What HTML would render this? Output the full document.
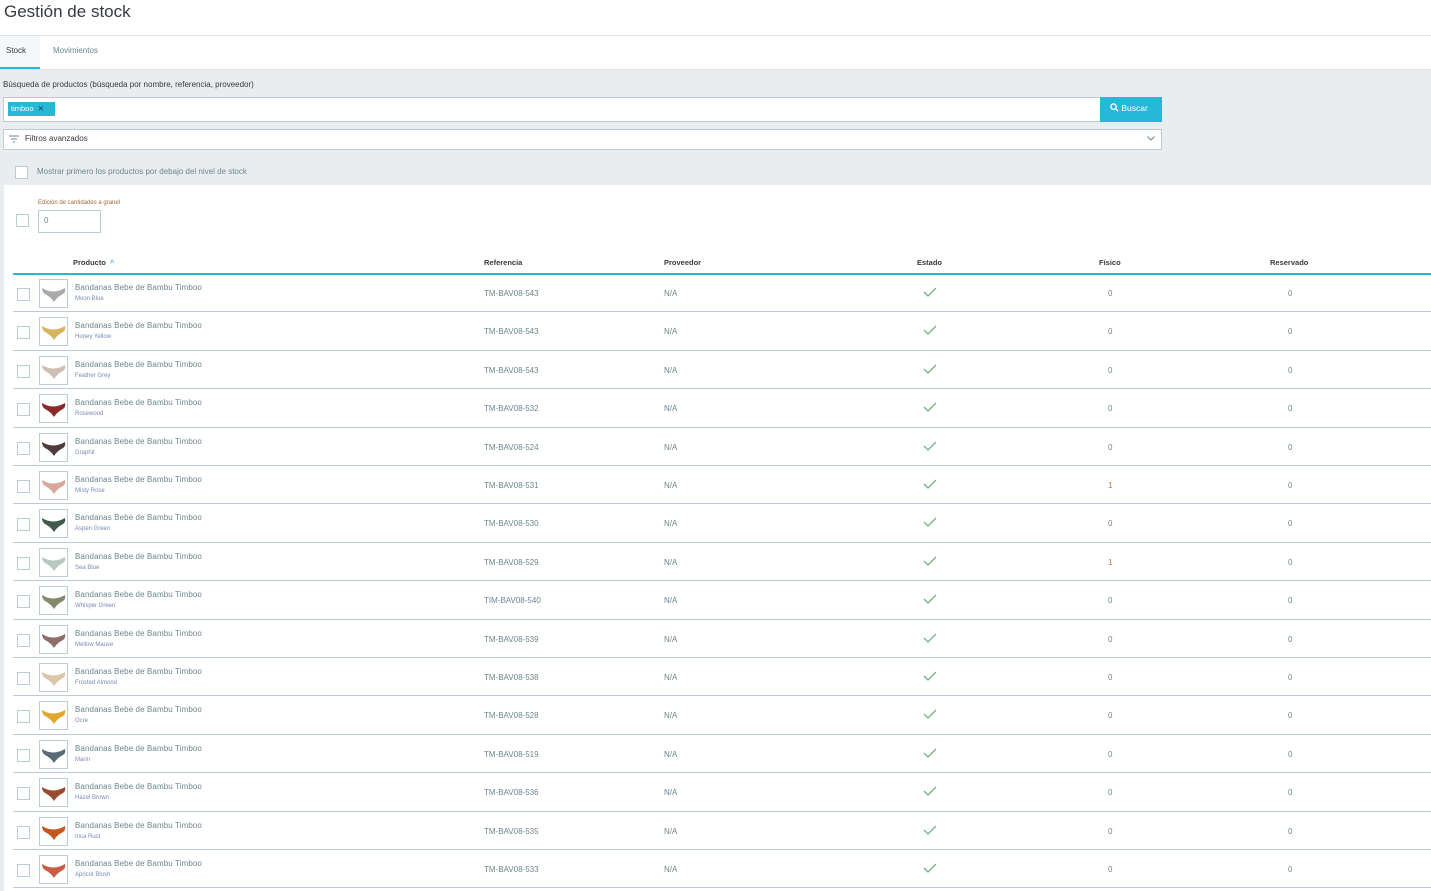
<!DOCTYPE html>
<html><head><meta charset="utf-8"><style>
*{box-sizing:border-box;margin:0;padding:0}
body{width:1431px;height:891px;overflow:hidden;background:#fff;font-family:"Liberation Sans",sans-serif;color:#363a41;position:relative}
.abs{position:absolute}
h1{position:absolute;left:4px;top:2px;font-size:17px;font-weight:normal;color:#363a41}
.cb{position:absolute;width:13px;height:13px;border:1px solid #bbcdd2;background:#fff}
.row{position:absolute;left:13px;width:1418px;height:38.4px;border-bottom:1px solid #bbcdd2;font-size:8px;color:#6c868e}
.row .c{left:4px;top:14px}
.th{position:absolute;left:26px;top:5px;width:29px;height:29px;border:1px solid #bbcdd2;background:#fff}
.nm{position:absolute;left:62px;top:9px;font-size:8px;color:#6c868e;letter-spacing:0.1px}
.vr{position:absolute;left:62px;top:22px;font-size:6px;color:#7a8ab8}
.rf{position:absolute;left:471px;top:15px}
.pv{position:absolute;left:651px;top:15px}
.ck{position:absolute;left:910px;top:13px}
.fi{position:absolute;left:1095px;top:15px}
.rs{position:absolute;left:1275px;top:15px}
.hd{position:absolute;top:258px;font-size:7.5px;font-weight:bold;color:#363a41}
</style></head><body>
<h1>Gestión de stock</h1>
<div class="abs" style="left:0;top:35px;width:1431px;height:1px;background:#dfe3e6"></div>
<div class="abs" style="left:0;top:36px;width:40px;height:33px;background:#f4f8fb;border-bottom:2px solid #25b9d7"></div>
<div class="abs" style="left:6px;top:46px;font-size:8px;color:#363a41">Stock</div>
<div class="abs" style="left:53px;top:46px;font-size:8px;color:#6c868e">Movimientos</div>
<div class="abs" style="left:0;top:69px;width:1431px;height:116px;background:#eaedef;border-top:1px solid #dfe3e6"></div>
<div class="abs" style="left:0;top:185px;width:4px;height:706px;background:#eaedef"></div>
<div class="abs" style="left:3px;top:80px;font-size:8px;color:#363a41">Búsqueda de productos (búsqueda por nombre, referencia, proveedor)</div>
<div class="abs" style="left:3px;top:97px;width:1098px;height:25px;background:#fff;border:1px solid #bbcdd2"></div>
<div class="abs" style="left:8px;top:102px;width:47px;height:14px;background:#25b9d7;color:#fff;font-size:7.5px;padding:2px 3px">timboo <span style="color:#1a3a44;margin-left:2px">✕</span></div>
<div class="abs" style="left:1100px;top:97px;width:62px;height:25px;background:#25b9d7;color:#fff;font-size:8.5px;padding:6px 0 0 10px"><svg width="9" height="9" viewBox="0 0 10 10" style="vertical-align:-1px"><circle cx="4" cy="4" r="3" fill="none" stroke="#fff" stroke-width="1.5"/><path d="M6 6l3 3" stroke="#fff" stroke-width="1.6"/></svg> Buscar</div>
<div class="abs" style="left:3px;top:129px;width:1159px;height:21px;background:#fff;border:1px solid #bbcdd2"></div>
<svg class="abs" style="left:9px;top:135px" width="10" height="8"><path d="M0 1h10M2 4h6M4 7h2" stroke="#6c868e" stroke-width="1"/></svg>
<div class="abs" style="left:25px;top:134px;font-size:8px;color:#363a41">Filtros avanzados</div>
<svg class="abs" style="left:1147px;top:136px" width="8" height="5"><path d="M0.5 0.5l3.5 3.5l3.5-3.5" fill="none" stroke="#6c868e"/></svg>
<div class="cb" style="left:15px;top:166px"></div>
<div class="abs" style="left:37px;top:167px;font-size:8px;color:#6c868e">Mostrar primero los productos por debajo del nivel de stock</div>
<div class="abs" style="left:4px;top:185px;width:1427px;height:706px;background:#fff"></div>
<div class="abs" style="left:38px;top:200px;font-size:6px;color:#a06a3a">Edición de cantidades a granel</div>
<div class="cb" style="left:16px;top:214px"></div>
<div class="abs" style="left:38px;top:210px;width:63px;height:23px;border:1px solid #bbcdd2;font-size:8px;color:#6c868e;padding:5px 0 0 5px">0</div>
<div class="hd" style="left:73px">Producto &nbsp;<span style="color:#25b9d7;font-size:7px">^</span></div>
<div class="hd" style="left:484px">Referencia</div>
<div class="hd" style="left:664px">Proveedor</div>
<div class="hd" style="left:917px">Estado</div>
<div class="hd" style="left:1099px">Físico</div>
<div class="hd" style="left:1270px">Reservado</div>
<div class="abs" style="left:13px;top:273px;width:1418px;height:2px;background:#25b9d7"></div>

<div id="rows"></div>
<script>
var d=[["Moon Blue","TM-BAV08-543","#a9aba8",0],["Honey Yellow","TM-BAV08-543","#d7b460",0],["Feather Grey","TM-BAV08-543","#cfc0b3",0],["Rosewood","TM-BAV08-532","#8c2a2a",0],["Graphit","TM-BAV08-524","#4e3b3b",0],["Misty Rose","TM-BAV08-531","#d8a89c",1],["Aspen Green","TM-BAV08-530","#3f5a4a",0],["Sea Blue","TM-BAV08-529","#b7c8c0",1],["Whisper Green","TIM-BAV08-540","#848a6c",0],["Mellow Mauve","TM-BAV08-539","#8f6d6a",0],["Frosted Almond","TM-BAV08-538","#dcc5a8",0],["Ocre","TM-BAV08-528","#e2a72c",0],["Marin","TM-BAV08-519","#5a6b78",0],["Hazel Brown","TM-BAV08-536","#9a4a2e",0],["Inca Rust","TM-BAV08-535","#c4561f",0],["Apricot Blush","TM-BAV08-533","#c95c45",0]];
var h="";
for(var i=0;i<d.length;i++){var t=274+i*38.4;
h+='<div class="row" style="top:'+t+'px"><div class="cb c"></div><div class="th"><svg width="27" height="27" viewBox="0 0 27 27"><path d="M2 8 Q13 15 25 8 Q26 12 23 14 Q17 17 14 22 Q11 17 5 14 Q2 12 2 8Z" fill="'+d[i][2]+'"/></svg></div><div class="nm">Bandanas Bebe de Bambu Timboo</div><div class="vr">'+d[i][0]+'</div><div class="rf">'+d[i][1]+'</div><div class="pv">N/A</div><svg class="ck" width="14" height="10"><path d="M1 5l4 4l8-8" fill="none" stroke="#70b580" stroke-width="1.3"/></svg><div class="fi"'+(d[i][3]?' style="color:#c0752a"':'')+'>'+d[i][3]+'</div><div class="rs">0</div></div>';}
document.getElementById("rows").innerHTML=h;
</script>
</body></html>
